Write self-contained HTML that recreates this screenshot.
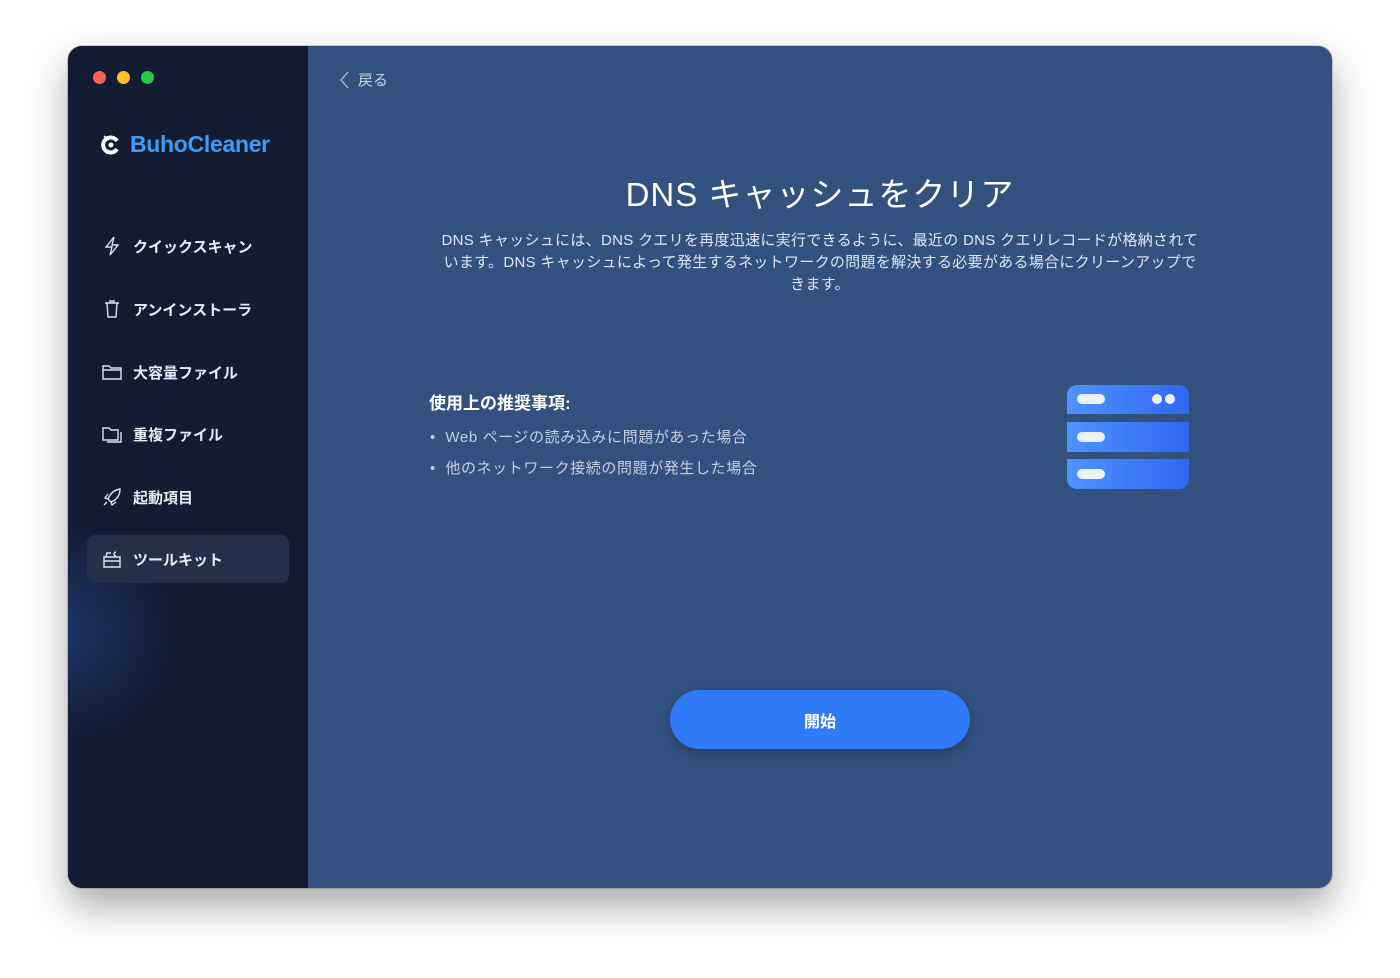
<!DOCTYPE html>
<html><head><meta charset="utf-8"><style>
*{margin:0;padding:0;box-sizing:border-box}
body{width:1400px;height:978px;background:#fff;position:relative;overflow:hidden;font-family:"Liberation Sans","Noto Sans CJK JP",sans-serif}
.win{position:absolute;left:68px;top:46px;width:1264px;height:842px;border-radius:14px;overflow:hidden;background:#33517f;box-shadow:0 18px 40px rgba(0,0,0,.35),0 0 0 1px rgba(0,0,0,.15)}
.side{position:absolute;left:0;top:0;width:240px;height:100%;background:#141c33;overflow:hidden}
.glow{position:absolute;left:-120px;top:470px;width:230px;height:230px;border-radius:50%;background:radial-gradient(circle,rgba(40,70,140,.55),rgba(20,28,51,0) 70%)}
.dot{position:absolute;top:25px;width:13px;height:13px;border-radius:50%}
.logo{position:absolute;left:32px;top:85px;font-size:23px;font-weight:bold;color:#3d9cf5;display:flex;align-items:center;gap:8px;letter-spacing:-.3px}
.item{position:absolute;left:19px;width:202px;height:48px;border-radius:8px;display:flex;align-items:center;padding-left:14px;gap:10px;color:#e8ecf5;font-size:15px;font-weight:bold}
.item svg{width:22px;height:22px}
.act{background:#252f4a}
.back{position:absolute;left:270px;top:23px;color:#c8d3e6;font-size:15px;display:flex;align-items:center;gap:8px}
h1{position:absolute;left:240px;right:0;top:122px;text-align:center;color:#fff;font-size:33px;font-weight:normal;letter-spacing:1px}
.desc{position:absolute;left:332px;width:840px;top:184px;text-align:center;color:#dfe6f2;font-size:15px;line-height:22px;white-space:nowrap;letter-spacing:.3px}
.rec{position:absolute;left:361px;top:343px;color:#fff;font-size:17px;font-weight:bold}
.li{position:absolute;left:362px;color:#c3cfe3;font-size:15px;letter-spacing:.6px}
.btn{position:absolute;left:602px;top:644px;width:300px;height:59px;border-radius:30px;background:#2f7bf5;color:#fff;font-size:16px;font-weight:bold;display:flex;align-items:center;justify-content:center;box-shadow:0 4px 10px rgba(0,0,0,.25)}
</style></head><body>
<div class="win">
<div class="side">
<div class="glow"></div>
<div class="dot" style="left:25px;background:#fe5f57"></div>
<div class="dot" style="left:49px;background:#febc2e"></div>
<div class="dot" style="left:73px;background:#28c840"></div>
<div class="logo"><svg width="22" height="22" viewBox="0 0 22 22"><path d="M17 7A7.5 7.5 0 1 0 17 15" stroke="#fff" stroke-width="4" fill="none"/><circle cx="11" cy="11" r="2.5" fill="#fff"/><path d="M4 2l5 4" stroke="#fff" stroke-width="1.5"/></svg>BuhoCleaner</div>
<div class="item" style="top:176px"><svg viewBox="0 0 22 22" fill="none" stroke="#dde3ee" stroke-width="1.4"><path d="M13 2L5 12h6l-2 8 8-10h-6l2-8z"/></svg>クイックスキャン</div>
<div class="item" style="top:239px"><svg viewBox="0 0 22 22" fill="none" stroke="#dde3ee" stroke-width="1.4"><path d="M4 5h14M9 5V3h4v2M6 5l1 14h8l1-14"/></svg>アンインストーラ</div>
<div class="item" style="top:302px"><svg viewBox="0 0 22 22" fill="none" stroke="#dde3ee" stroke-width="1.4"><path d="M2 5h6l2 2h10v11H2zM2 9h18"/></svg>大容量ファイル</div>
<div class="item" style="top:364px"><svg viewBox="0 0 22 22" fill="none" stroke="#dde3ee" stroke-width="1.4"><path d="M2 5h6l2 2h7v10H2zM20 9v10H6"/></svg>重複ファイル</div>
<div class="item" style="top:427px"><svg viewBox="0 0 22 22" fill="none" stroke="#dde3ee" stroke-width="1.4"><path d="M19 3C13 4 9 8 7 13l3 3c5-2 9-6 9-13zM7 13l-3-1 3-4M10 16l1 3 4-3M3 19l3-3"/></svg>起動項目</div>
<div class="item act" style="top:489px"><svg viewBox="0 0 22 22" fill="none" stroke="#dde3ee" stroke-width="1.4"><path d="M3 9h16v10H3zM3 13h16M5 9l1-4h4M15 4a2 2 0 1 0 0 4"/></svg>ツールキット</div>
</div>
<div class="back"><svg width="12" height="20" viewBox="0 0 12 20"><path d="M10 2L3 10l7 8" stroke="#9fb2d0" stroke-width="1.5" fill="none"/></svg>戻る</div>
<h1>DNS キャッシュをクリア</h1>
<div class="desc">DNS キャッシュには、DNS クエリを再度迅速に実行できるように、最近の DNS クエリレコードが格納されて<br>います。DNS キャッシュによって発生するネットワークの問題を解決する必要がある場合にクリーンアップで<br>きます。</div>
<div class="rec">使用上の推奨事項:</div>
<div class="li" style="top:380px">•&nbsp; Web ページの読み込みに問題があった場合</div>
<div class="li" style="top:411px">•&nbsp; 他のネットワーク接続の問題が発生した場合</div>
<svg style="position:absolute;left:998px;top:337px" width="124" height="110" viewBox="0 0 124 110">
<defs><linearGradient id="g" x1="0" x2="1"><stop offset="0" stop-color="#4f93ff"/><stop offset="1" stop-color="#2f67f0"/></linearGradient></defs>
<path d="M1 12a10 10 0 0 1 10-10h102a10 10 0 0 1 10 10v19H1z" fill="url(#g)"/>
<rect x="1" y="39" width="122" height="30" fill="url(#g)"/>
<path d="M1 76h122v20a10 10 0 0 1-10 10H11a10 10 0 0 1-10-10z" fill="url(#g)"/>
<rect x="11" y="11" width="28" height="10" rx="5" fill="#eef0fa"/>
<rect x="11" y="49" width="28" height="10" rx="5" fill="#eef0fa"/>
<rect x="11" y="86" width="28" height="10" rx="5" fill="#eef0fa"/>
<circle cx="91" cy="16" r="5" fill="#eef0fa"/><circle cx="104" cy="16" r="5" fill="#eef0fa"/>
</svg>
<div class="btn">開始</div>
</div>
</body></html>
